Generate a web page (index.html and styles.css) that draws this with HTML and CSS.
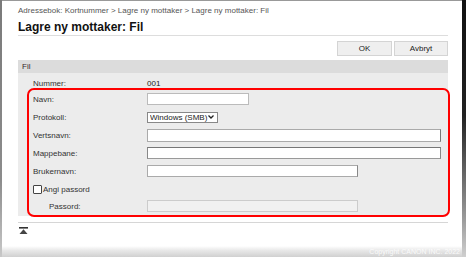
FILE: index.html
```html
<!DOCTYPE html>
<html lang="no">
<head>
  <meta charset="UTF-8">
  <meta name="viewport" content="width=device-width, initial-scale=1.0">
  <title>Lagre ny mottaker: Fil</title>
  <link rel="stylesheet" href="styles.css">
</head>
<body>
  <div class="screen">
    <div class="edge-left"></div>
    <div class="window">
      <div class="page">
        <div class="crumb">Adressebok: Kortnummer &gt; Lagre ny mottaker &gt; Lagre ny mottaker: Fil</div>
        <h1 class="title">Lagre ny mottaker: Fil</h1>
        <div class="actions">
          <button type="button" class="btn">OK</button>
          <button type="button" class="btn">Avbryt</button>
        </div>

        <div class="section">
          <div class="section-head">Fil</div>
          <div class="section-body">
            <div class="row row-plain">
              <span class="label">Nummer:</span>
              <span class="value">001</span>
            </div>
            <div class="group">
              <div class="row">
                <label class="label" for="navn">Navn:</label>
                <input class="field field-short" type="text" id="navn">
              </div>
              <div class="row">
                <label class="label" for="protokoll">Protokoll:</label>
                <select class="select" id="protokoll">
                  <option>Windows (SMB)</option>
                  <option>FTP</option>
                </select>
              </div>
              <div class="row">
                <label class="label" for="vert">Vertsnavn:</label>
                <input class="field field-long" type="text" id="vert">
              </div>
              <div class="row">
                <label class="label" for="mappe">Mappebane:</label>
                <input class="field field-long field-dark" type="text" id="mappe">
              </div>
              <div class="row">
                <label class="label" for="bruker">Brukernavn:</label>
                <input class="field field-mid" type="text" id="bruker">
              </div>
              <div class="row row-check">
                <label class="check-label"><input class="check" type="checkbox">Angi passord</label>
              </div>
              <div class="row row-last">
                <label class="label label-sub" for="pass">Passord:</label>
                <input class="field field-mid" type="password" id="pass" disabled>
              </div>
            </div>
          </div>
        </div>

        <div class="rule"></div>
        <a class="to-top" href="#">
          <svg width="9" height="7" viewBox="0 0 9 7">
            <rect x="0" y="0" width="9" height="1.6" fill="#333"/>
            <path d="M4.5 2.2 L8.5 7 H0.5 Z" fill="#444"/>
          </svg>
        </a>
      </div>
      <div class="footer">Copyright CANON INC. 2022</div>
    </div>
    <div class="edge-right"></div>
  </div>
</body>
</html>
```

FILE: styles.css
```css
body {
  margin: 0;
  font-family: "Liberation Sans", Arial, sans-serif;
  font-size: 8px;
  color: #333;
  background-color: #fff;
  overflow: hidden;
}

.screen {
  display: flex;
  width: 466px;
  height: 257px;
}

.edge-left {
  width: 2px;
  background: linear-gradient(#7a7a7a, #8c8c8c 70%, #c8c8c8);
}

.edge-right {
  width: 4px;
  background: linear-gradient(#111 0, #222 45%, #9a9a9a 85%, #cfcfcf);
}

.window {
  flex: 1;
  display: flex;
  flex-direction: column;
  border-top: 1px solid #999;
  min-width: 0;
}

.page {
  flex: 1;
  padding: 0 14px 0 16px;
}

.crumb {
  margin-top: 5px;
  line-height: 10px;
  color: #555;
  white-space: nowrap;
}

.title {
  margin: 4px 0 0;
  padding-bottom: 1px;
  font-size: 12px;
  line-height: 14px;
  font-weight: bold;
  color: #111;
  border-bottom: 1px solid #ddd;
}

.actions {
  display: flex;
  justify-content: flex-end;
  gap: 2px;
  margin-top: 5px;
}

.btn {
  width: 55px;
  height: 15px;
  padding: 0;
  font-family: inherit;
  font-size: 8px;
  color: #222;
  background-color: #efefef;
  border: 1px solid #d4d4d4;
  border-radius: 0;
}

.btn + .btn {
  width: 54px;
}

.section {
  margin-top: 4px;
}

.section-head {
  height: 13px;
  line-height: 13px;
  padding-left: 4px;
  background-color: #dcdcdc;
  color: #3a2a2a;
}

.section-body {
  background-color: #ececec;
  padding-top: 5px;
  height: 138px;
}

.row {
  display: grid;
  grid-template-columns: 114px auto;
  align-items: center;
  justify-items: start;
  height: 18px;
}

.row-plain {
  height: 10px;
  padding-left: 15px;
}

.row-last {
  height: 16px;
}

.group {
  margin: 0 -2px 0 9px;
  padding: 0 0 1px 4px;
  border: 2px solid #f00;
  border-radius: 7px;
}

.label {
  color: #333;
}

.label-sub {
  padding-left: 16px;
}

.value {
  color: #222;
}

.field {
  box-sizing: border-box;
  height: 12px;
  margin: 0;
  padding: 0 2px;
  font-family: inherit;
  font-size: 8px;
  background-color: #fff;
  border: 1px solid #aaa;
  border-radius: 0;
}

.field-short {
  width: 102px;
  border-color: #bbb;
}

.field-long {
  width: 294px;
  height: 13px;
  border-color: #aaa #777 #aaa #aaa;
}

.field-dark {
  height: 12px;
  border-color: #777 #888 #999 #888;
}

.field-mid {
  width: 211px;
  border-color: #aaa #888 #aaa #aaa;
}

.field:disabled {
  background-color: #f1f1f1;
  border-color: #ccc;
}

.select {
  appearance: none;
  -webkit-appearance: none;
  box-sizing: border-box;
  width: 71px;
  height: 11px;
  margin: 0;
  padding: 0 0 0 2px;
  font-family: inherit;
  font-size: 8px;
  line-height: 9px;
  color: #222;
  background-color: #fff;
  border: 1px solid #888;
  border-radius: 0;
  background-image: url("data:image/svg+xml,%3Csvg xmlns='http://www.w3.org/2000/svg' width='6' height='4' viewBox='0 0 6 4'%3E%3Cpath d='M0.5 0.5 L3 3 L5.5 0.5' fill='none' stroke='%23222' stroke-width='1.3'/%3E%3C/svg%3E");
  background-repeat: no-repeat;
  background-position: right 3px top 50%;
  background-size: 6px 4px;
}

.row-check {
  display: flex;
}

.check-label {
  display: flex;
  align-items: center;
  gap: 1px;
  color: #333;
}

.check {
  appearance: none;
  -webkit-appearance: none;
  width: 9px;
  height: 9px;
  margin: 0;
  background-color: #fff;
  border: 1px solid #444;
  border-radius: 1px;
}

.rule {
  margin-top: 6px;
  border-top: 1px solid #d6d6d6;
}

.to-top {
  display: block;
  width: 9px;
  height: 7px;
  margin: 4px 0 0 1px;
}

.to-top svg {
  display: block;
}

.footer {
  height: 11px;
  padding-right: 2px;
  text-align: right;
  font-size: 7px;
  line-height: 12px;
  color: rgba(255, 255, 255, 0.85);
  background: linear-gradient(#fff, #e8e8e8 40%, #d0d0d0);
  white-space: nowrap;
  overflow: hidden;
}
```
